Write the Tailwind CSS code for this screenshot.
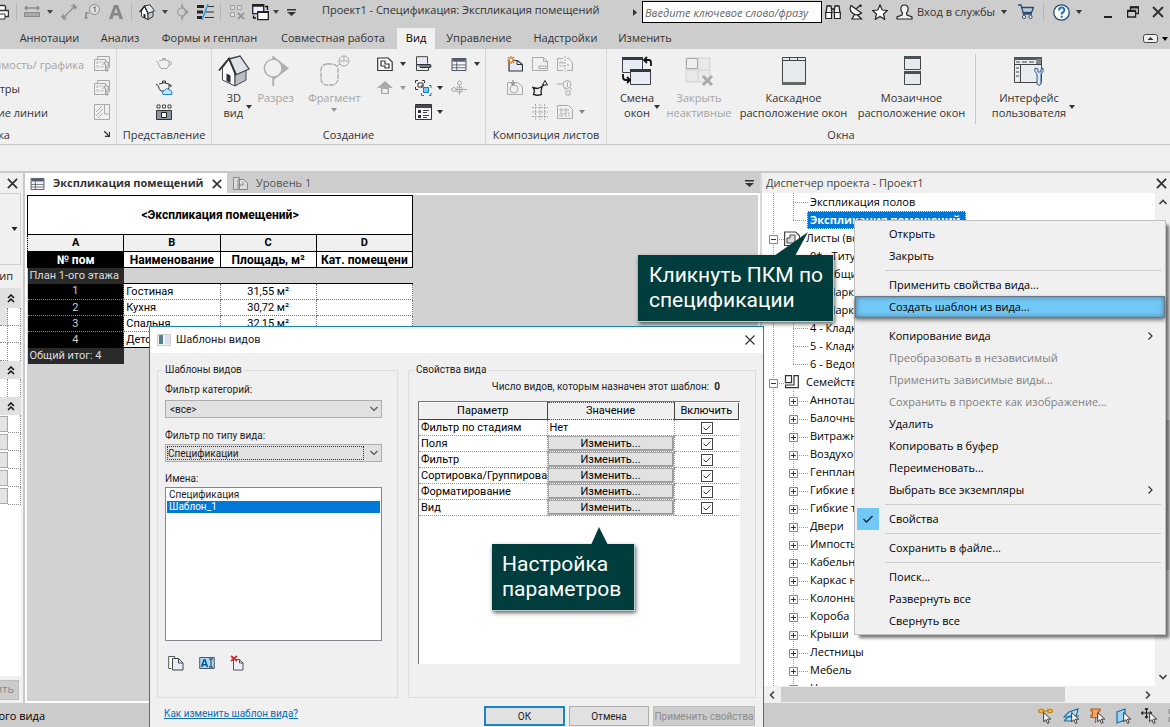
<!DOCTYPE html>
<html lang="ru">
<head>
<meta charset="utf-8">
<title>Проект1 - Спецификация: Экспликация помещений</title>
<script src="https://cdn.jsdelivr.net/npm/@tailwindcss/browser@4"></script>
</head>
<body class="bg-[#f0f0f0] font-['Open_Sans','Noto_Sans',sans-serif] text-[11px] text-[#1e1e1e]">
<svg class="hidden" aria-hidden="true">
  <symbol id="dn" viewBox="0 0 6 4"><path d="M0 0h6L3 4z" fill="currentColor"/></symbol>
  <symbol id="x" viewBox="0 0 12 12"><path d="M1 1l10 10M11 1L1 11" stroke="#333" stroke-width="2" fill="none"/></symbol>
  <symbol id="switch" viewBox="0 0 32 32"><path d="M1.500 2.500h20v15h-20z" fill="#e9ebf5" stroke="#3c4048"/><path d="M1 2h21v3H1z" fill="#33373f"/><path d="M9.500 14.500h20v15h-20z" fill="#e9ebf5" stroke="#3c4048"/><path d="M9 14h21v3H9z" fill="#33373f"/><path d="M24 5h4q2 0 2 3v3M26 2l-3 3 3 3M2 19v3q0 3 3 3h3M6 22l3 3-3 3" fill="none" stroke="#111" stroke-width="1.800"/></symbol>
  <symbol id="switch-sm" viewBox="0 0 17 17"><path d="M.7.7h11v9H.7z" fill="#eef" stroke="#222" stroke-width="1.300"/><path d="M0 1.500h12" stroke="#222" stroke-width="2.500"/><path d="M5.700 7.700h10.600v8H5.700z" fill="#fff" stroke="#222" stroke-width="1.300"/><path d="M5 8h12" stroke="#222" stroke-width="2"/><path d="M13 2.500h2.500V6M1.500 11.500V14H4" fill="none" stroke="#111" stroke-width="1.300"/></symbol>
  <symbol id="house" viewBox="0 0 32 32"><path d="M4.500 13v12L17 31V18L11 4z" fill="#fbfbfc" stroke="#444"/><path d="M17 18v13l11-6V13z" fill="#b9bdc5" stroke="#444"/><path d="M11 4l11-3 9 13-13.500 6z" fill="#dfe2e8" stroke="#444" stroke-width="1.300"/><path d="M1 15.500L11 3.500l7 16" fill="none" stroke="#333" stroke-width="1.800"/><path d="M8.500 18.500l4 2V28l-4-2z" fill="#2f3238"/></symbol>
  <symbol id="section" viewBox="0 0 30 34"><path d="M12 1L29 14 12 27z" fill="#b0b0b0"/><path d="M12 1v32" stroke="#b0b0b0" stroke-width="2"/><circle cx="12" cy="14" r="9.500" fill="#f0f0f0" stroke="#b0b0b0" stroke-width="1.500"/></symbol>
  <symbol id="teapot" viewBox="0 0 18 14"><path d="M4 4q5-2.500 10 0 1 4-2 7.500H6Q3.500 9 3.500 6L1 4M14 5q3-1 2.500 1.500Q16 8 13.500 9M7.500 3V1.500h3V3" fill="none" stroke="currentColor"/></symbol>
  <symbol id="vg" viewBox="0 0 16 16"><path d="M3.500 3V.5h12V12M.5 3.500h11v11H.5z" fill="none" stroke="#aaa"/><path d="M3 6h6v5H3z" fill="none" stroke="#aaa" stroke-dasharray="1.500 1"/><path d="M10 7q2-3 5 0l-1 3v5h-2v-5z" fill="#e4e4e4" stroke="#999"/></symbol>
  <symbol id="grid" viewBox="0 0 16 14"><path d="M.5.5h15v13H.5z" fill="#f5f5fa" stroke="#3a3f4c"/><path d="M1 1h14v3H1z" fill="#525c74"/><path d="M1 7.500h14M1 10.500h14M5.500 4v9" stroke="#3a3f4c" stroke-width=".8"/></symbol>
  <symbol id="chev2" viewBox="0 0 8 9"><path d="M1 4l3-3 3 3M1 8l3-3 3 3" fill="none" stroke="#111" stroke-width="1.500"/></symbol>
  <symbol id="chevd" viewBox="0 0 8 6"><path d="M.5 1L4 4.500 7.500 1" fill="none" stroke="#555" stroke-width="1.200"/></symbol>
  <symbol id="cursor" viewBox="0 0 8 11"><path d="M.5.5v8.500l2-2 1.500 3.500 1.500-.7L4 6.500h3z" fill="#fff" stroke="#333" stroke-width=".9"/></symbol>
  <symbol id="t-leaf" viewBox="0 0 46 18"><path d="M11.500 0v18M31.500 0v18M31 9.500h15" fill="none" stroke="#999" stroke-dasharray="1 1"/></symbol>
  <symbol id="t-last" viewBox="0 0 46 18"><path d="M11.500 0v18M31.500 0v9M31 9.500h15" fill="none" stroke="#999" stroke-dasharray="1 1"/></symbol>
  <symbol id="t-node" viewBox="0 0 46 18"><path d="M11.500 0v18M31.500 0v18M31 10.500h15" fill="none" stroke="#999" stroke-dasharray="1 1"/><path d="M27.500 6.500h8v8h-8z" fill="#fff" stroke="#888"/><path d="M29 10.500h5M31.500 8v5" stroke="#334"/></symbol>
  <symbol id="t-root" viewBox="0 0 22 18"><path d="M11.500 0v18M11 10.500h11" fill="none" stroke="#999" stroke-dasharray="1 1"/><path d="M7.500 6.500h8v8h-8z" fill="#fff" stroke="#888"/><path d="M9 10.500h5" stroke="#334"/></symbol>
</svg>

<div class="relative flex h-screen flex-col overflow-hidden whitespace-nowrap">
  <!-- Title bar -->
  <header class="flex h-7 shrink-0 items-center bg-[#cdcdcd] pb-1 text-[#333]">
    <div class="flex items-center text-[#444]">
      <svg class="h-4 w-4 -ml-[7px]" viewBox="0 0 16 16"><path d="M3.500 6V1.500h8l1 1V6M1.500 6.500h14v6h-14z" fill="#fff" stroke="#333" stroke-width="1.400"/><path d="M4 10h8v5H4z" fill="#fff" stroke="#333"/></svg>
      <span class="ml-[7px] h-5 w-px bg-[#b8b8b8]"></span>
      <svg class="ml-[7px] h-4 w-4" viewBox="0 0 16 16"><path d="M1 4h14M3 2L1 4l2 2M13 2l2 2-2 2" fill="none" stroke="#8b8b8b" stroke-width="1.300"/><path d="M.5 8.500h15v4H.5z" fill="#aaa" stroke="#8b8b8b"/></svg>
      <svg class="ml-[7px] h-1 w-[6px]"><use href="#dn"/></svg>
      <svg class="ml-2 h-4 w-4" viewBox="0 0 16 16"><path d="M2 14L14 2M10 2h4v4M2 10v4h4M0 12l4 4M12 0l4 4" fill="none" stroke="#8b8b8b" stroke-width="1.200"/></svg>
      <svg class="ml-[7px] h-4 w-4" viewBox="0 0 16 16"><circle cx="10.500" cy="5.500" r="5" fill="#ddd" stroke="#8b8b8b"/><path d="M11 8V3L9.500 4M2 14V9h3M.5 14h3" fill="none" stroke="#777" stroke-width="1.200"/></svg>
      <svg class="ml-[9px] h-[14px] w-[14px]" viewBox="0 0 14 14"><path d="M0 14L5 0h4l5 14h-3.500l-1-3.500h-5l-1 3.500zM5.300 8h3.400L7 3z" fill="#868686"/></svg>
      <span class="ml-2 h-5 w-px bg-[#b8b8b8]"></span>
      <svg class="ml-[7px] h-4 w-4" viewBox="0 0 16 16"><path d="M2.500 7v5.500L9 15.500V9L5.500 2z" fill="#fff" stroke="#333"/><path d="M9 9v6.500l5-3V7z" fill="#c4c8cf" stroke="#333"/><path d="M5.500 2L11 .8l4.500 6L9 9.500z" fill="#e6e8ec" stroke="#333"/><path d="M.5 8l5-6L9 9.500" fill="none" stroke="#222" stroke-width="1.200"/><path d="M4.500 9.500l2 1v4l-2-1z" fill="#222"/></svg>
      <svg class="ml-[7px] h-1 w-[6px]"><use href="#dn"/></svg>
      <svg class="ml-[7px] h-4 w-4" viewBox="0 0 16 16"><path d="M7 2l7 6-7 6z" fill="#999"/><path d="M7 0v16" stroke="#999" stroke-width="1.500"/><circle cx="6.500" cy="8" r="4" fill="#cdcdcd" stroke="#999"/></svg>
      <svg class="ml-[6px] h-4 w-[17px]" viewBox="0 0 17 16"><path d="M0 2.500h7M0 8h6M0 13.500h5" stroke="#222" stroke-width="3"/><path d="M10 2.500h7M9 8h8M8 13.500h9" stroke="#333" stroke-width="1.200"/><path d="M11 0L5 16" stroke="#2a9be0" stroke-width="1.500"/></svg>
      <span class="ml-[6px] h-5 w-px bg-[#b8b8b8]"></span>
      <svg class="ml-2 h-4 w-4" viewBox="0 0 16 16"><path d="M1.500 1.500h4v4h-4zM8.500 1.500h4v4h-4zM1.500 8.500h4v4h-4z" fill="#ddd" stroke="#a0a0a0"/><path d="M9 9l6 6M15 9l-6 6" stroke="#999" stroke-width="1.800"/></svg>
      <svg class="ml-[7px] h-[17px] w-[17px]"><use href="#switch-sm"/></svg>
      <svg class="ml-1 h-1 w-[6px]"><use href="#dn"/></svg>
      <svg class="ml-2 h-[7px] w-[9px]" viewBox="0 0 9 7"><path d="M0 0h9v1.500H0zM0 3h9L4.500 7z" fill="#333"/></svg>
    </div>
    <h1 class="ml-[26px] w-[304px] pb-[4px]">Проект1 - Спецификация: Экспликация помещений</h1>
    <svg class="ml-[7px] h-[7px] w-1" viewBox="0 0 4 7"><path d="M0 0l4 3.500L0 7z" fill="#333"/></svg>
    <input type="text" aria-label="Поиск" placeholder="Введите ключевое слово/фразу" class="ml-[5px] h-[22px] w-[180px] shrink-0 border border-black bg-white px-[2px] text-[11px] italic placeholder:text-[#666]">
    <div class="ml-auto flex shrink-0 items-center pr-[6px]">
      <svg class="h-4 w-4" viewBox="0 0 16 16"><path d="M1 9l1-7h4l1 7M9 9l1-7h4l1 7M7 5h2" fill="#eee" stroke="#222" stroke-width="1.300"/><path d="M.7 8.500h5.800v6H.7zM9.500 8.500h5.800v6H9.500z" fill="#fff" stroke="#222" stroke-width="1.200"/></svg>
      <svg class="ml-2 h-4 w-[15px]" viewBox="0 0 15 16"><path d="M2 1.500q-2.500 5 2 8t8.500-.5zM7 5l4-3.500M5.500 10.500L3 15h9.500L8.500 11" fill="#f4f4f4" stroke="#222" stroke-width="1.200"/><circle cx="11.500" cy="1.800" r="1.300" fill="#222"/></svg>
      <svg class="ml-2 h-4 w-4" viewBox="0 0 16 16"><path d="M8 1l2.200 5 5.300.5-4 3.500 1.200 5.300L8 12.500l-4.700 2.800L4.500 10l-4-3.500L5.800 6z" fill="#fff" stroke="#222" stroke-width="1.200"/></svg>
      <svg class="ml-2 h-4 w-[17px]" viewBox="0 0 17 16"><path d="M8.500 1c-5 0-4 6-2 8L6 11l-5 2v2h15v-2l-5-2-.5-2c2-2 3-8-2-8z" fill="#f2f2f2" stroke="#222" stroke-width="1.200"/></svg>
      <button class="ml-1 flex w-[90px] items-center justify-between">Вход в службы<svg class="h-1 w-[6px]"><use href="#dn"/></svg></button>
      <svg class="ml-[11px] h-4 w-4" viewBox="0 0 16 16"><path d="M0 1h3l2.500 9H14M3.500 3.500h12l-2 5H5" fill="#b9cbe0" stroke="#2c4a72" stroke-width="1.300"/><circle cx="6" cy="13" r="1.600" fill="#fff" stroke="#2c4a72"/><circle cx="12.500" cy="13" r="1.600" fill="#fff" stroke="#2c4a72"/></svg>
      <span class="ml-[9px] h-5 w-px bg-[#b8b8b8]"></span>
      <svg class="ml-[9px] h-[17px] w-[17px]" viewBox="0 0 17 17"><circle cx="8.500" cy="8.500" r="7.700" fill="#fff" stroke="#2c4a72" stroke-width="1.300"/><path d="M6 6.500q0-3 2.700-3t2.600 2.700q0 1.500-1.600 2.300-1 .5-1 2M8.700 11.700v2" fill="none" stroke="#1474b8" stroke-width="2"/></svg>
      <svg class="ml-[6px] h-1 w-[6px]"><use href="#dn"/></svg>
      <button aria-label="Свернуть" class="ml-[22px] flex h-4 items-end pb-[2px]"><span class="h-[2px] w-2 bg-[#222]"></span></button>
      <button aria-label="Восстановить" class="ml-[15px]"><svg class="h-3 w-3" viewBox="0 0 12 12"><path d="M3.500 4V.8h8v6.700H9M.6 4.500h8V11h-8z" fill="none" stroke="#222" stroke-width="1.300"/><path d="M3 1.500h9M0 5h9" stroke="#222" stroke-width="2"/></svg></button>
      <button aria-label="Закрыть" class="ml-[13px]"><svg class="h-3 w-3"><use href="#x"/></svg></button>
    </div>
  </header>

  <!-- Ribbon tabs -->
  <nav class="flex h-[21px] shrink-0 items-stretch bg-[#cdcdcd] pl-[9px] text-[#333]">
    <button class="w-[81px]">Аннотации</button>
    <button class="w-[60px]">Анализ</button>
    <button class="w-[119px]">Формы и генплан</button>
    <button class="w-[128px]">Совместная работа</button>
    <button class="w-[38px] bg-[#f0f0f0] text-black">Вид</button>
    <button class="w-[88px]">Управление</button>
    <button class="w-[85px]">Надстройки</button>
    <button class="w-[74px]">Изменить</button>
    <span class="ml-auto flex items-center gap-1 pr-[2px] text-black">
      <svg class="h-[9px] w-[15px]" viewBox="0 0 15 9"><rect x=".5" y=".5" width="14" height="8" rx="2" fill="#f0f0f0" stroke="#444"/><path d="M4.500 6h6l-3-3z" fill="#333"/></svg>
      <svg class="h-1 w-[6px]"><use href="#dn"/></svg>
    </span>
  </nav>

  <!-- Ribbon -->
  <section class="flex h-24 shrink-0 border-b border-[#c6c6c6] leading-[15px] text-[#333]">
    <div class="flex w-[117px] shrink-0 flex-col border-r border-[#d6d6d6] pt-[3px]">
      <div class="flex h-6 items-center justify-between pr-[6px] text-[#a4a4a4]"><span class="flex w-[84px] justify-end overflow-hidden">Видимость/ графика</span><svg class="h-4 w-4"><use href="#vg"/></svg></div>
      <div class="flex h-6 items-center justify-between pr-[6px]"><span class="flex w-5 justify-end overflow-hidden">Фильтры</span><svg class="h-4 w-4"><use href="#vg"/></svg></div>
      <div class="flex h-6 items-center justify-between pr-[6px]"><span class="flex w-12 justify-end overflow-hidden">Тонкие линии</span><svg class="h-4 w-4" viewBox="0 0 16 16"><path d="M.5.5h15v15H.5zM10.500 0v10H16M2 8l6-6M2 12L9 5M4 14l5-5" fill="none" stroke="#aaa"/></svg></div>
      <div class="flex h-5 items-center justify-between pr-[6px]"><span class="flex w-[10px] justify-end overflow-hidden">Графика</span><svg class="h-[6px] w-[6px]" viewBox="0 0 6 6"><path d="M0 0l5 5M5.500 1v4.500H1" fill="none" stroke="#333" stroke-width="1.300"/></svg></div>
    </div>
    <div class="flex w-[95px] shrink-0 flex-col items-center border-r border-[#d6d6d6] pt-[3px]">
      <svg class="my-[5px] h-[14px] w-[18px] text-[#aaa]"><use href="#teapot"/></svg>
      <svg class="my-1 h-4 w-[18px]" viewBox="0 0 18 16"><path d="M4 4q5-2.500 10 0 1 4-2 7H6Q3.500 9 3.500 6L1 4M14 5q3-1 2 2M7.500 3V1h3v2" fill="none" stroke="#333"/><path d="M8 14.500q-2-3 1.500-4 2-3.500 4.500-1 3.500.5 3 5z" fill="#c3e6fa" stroke="#1b84c4"/></svg>
      <svg class="my-1 h-4 w-4" viewBox="0 0 16 16"><path d="M1 1h3v3H1zM6.500 1h3v3h-3zM12 1h3v3h-3z" fill="#fff" stroke="#444"/><path d="M.5 6.500h15v9H.5z" fill="#8b98a2" stroke="#333"/><path d="M5.500 8.500h5v5h-5z" fill="#fff" stroke="#222"/></svg>
      <div class="flex h-5 items-center">Представление</div>
    </div>
    <div class="flex w-[274px] shrink-0 flex-col border-r border-[#d6d6d6] pt-[3px]">
      <div class="flex h-[72px]">
        <div class="flex w-11 flex-col items-center pt-[3px]"><svg class="h-8 w-8"><use href="#house"/></svg><span class="mt-[3px]">3D</span><span class="flex items-start gap-[3px] pl-2">вид<svg class="h-1 w-[6px]"><use href="#dn"/></svg></span></div>
        <div class="flex w-10 flex-col items-center pt-[3px] text-[#a4a4a4]"><svg class="h-8 w-[28px]"><use href="#section"/></svg><span class="mt-[3px]">Разрез</span></div>
        <div class="flex w-[78px] flex-col items-center pt-[3px] text-[#a4a4a4]"><svg class="h-8 w-8" viewBox="0 0 32 32"><rect x="3" y="9" width="17" height="21" rx="6" fill="none" stroke="#aaa" stroke-width="1.300" stroke-dasharray="5 1"/><circle cx="26" cy="6" r="5" fill="none" stroke="#aaa"/><path d="M19 11l3-2M21 6h10M26 1v5" stroke="#aaa"/></svg><span class="mt-[3px]">Фрагмент</span><svg class="mt-[3px] h-1 w-[6px] text-[#999]"><use href="#dn"/></svg></div>
        <div class="grid grid-cols-[38px_36px_34px] grid-rows-3 items-center pl-1">
          <span class="flex items-center gap-[7px]"><svg class="h-4 w-4" viewBox="0 0 16 16"><path d="M.7 2h10.500l4 4v8.500H.7z" fill="#fff" stroke="#333" stroke-width="1.200"/><path d="M4 5h4v3h4v4H8v-2H4z" fill="none" stroke="#333" stroke-width="1.200"/></svg><svg class="h-1 w-[6px]"><use href="#dn"/></svg></span>
          <svg class="h-4 w-[17px]" viewBox="0 0 17 16"><path d="M1.500 14.500V.7h11v6.800" fill="#e8eaf2" stroke="#444"/><path d="M1.500 8.500H15l1 1.500-1 1.500H5" fill="#777e8a" stroke="#333" stroke-width="1.200"/><path d="M1.500 14.500h12v-3" fill="none" stroke="#444"/></svg>
          <span class="flex items-center gap-[7px]"><svg class="h-[13px] w-4"><use href="#grid"/></svg><svg class="h-1 w-[6px]"><use href="#dn"/></svg></span>
          <span class="flex items-center gap-[7px] text-[#999]"><svg class="h-4 w-4" viewBox="0 0 16 16"><path d="M0 8l8-7 8 7h-4v6H4V8z" fill="#aaa"/><path d="M5.500 9h5v4h-5z" fill="#f0f0f0"/></svg><svg class="h-1 w-[6px]"><use href="#dn"/></svg></span>
          <span class="flex items-center gap-[5px]"><svg class="h-4 w-[17px]" viewBox="0 0 17 16"><path d="M.5 3V.5H3M7 .5h2.500V3M.5 7v2.500H3M3 3h5v4H3z" fill="none" stroke="#333"/><path d="M6.500 8V5.500H9M14 5.500h2V8M6.500 13v2.500H9M14 15.500h2V13" fill="none" stroke="#0b7cc4"/><path d="M8.500 7.500h5v5h-5z" fill="#7cc8f0" stroke="#0b7cc4"/></svg><svg class="h-1 w-[6px]"><use href="#dn"/></svg></span>
          <svg class="h-4 w-4" viewBox="0 0 16 16"><path d="M8.500 1v14M0 9.500h16" stroke="#aaa"/><circle cx="8.500" cy="3" r="2" fill="#f0f0f0" stroke="#aaa"/><circle cx="3" cy="9.500" r="2" fill="#f0f0f0" stroke="#aaa"/><path d="M6 7h5v5H6z" fill="none" stroke="#aaa"/></svg>
          <span></span>
          <span class="flex items-center gap-[5px]"><svg class="h-4 w-[17px]" viewBox="0 0 17 16"><path d="M.5.5h16v15H.5z" fill="#f5f5fa" stroke="#333"/><path d="M1 1h15v3H1z" fill="#444b55"/><path d="M3 6h3v3H3zM3 11h3v3H3z" fill="#333"/><path d="M8 6.500h6M8 8.500h4M8 11.500h6M8 13.500h4" stroke="#444"/></svg><svg class="h-1 w-[6px]"><use href="#dn"/></svg></span>
          <span></span>
        </div>
      </div>
      <div class="flex h-5 items-center justify-center">Создание</div>
    </div>
    <div class="flex w-[121px] shrink-0 flex-col border-r border-[#d6d6d6] pt-[3px]">
      <div class="grid h-[72px] grid-cols-[25px_25px_30px] items-center pl-[21px] text-[#aaa]">
        <svg class="h-4 w-4" viewBox="0 0 16 16"><path d="M2 4.500h8.500l5 4v6.500H2z" fill="#e6e9f6" stroke="#333" stroke-width="1.200"/><path d="M10 4.500v4h5" fill="none" stroke="#333"/><path d="M4 0v8M0 4h8M1 1l6 6M7 1L1 7" stroke="#d9761c" stroke-width="1.200"/><circle cx="4" cy="4" r="1.500" fill="#fff"/></svg>
        <svg class="h-4 w-4" viewBox="0 0 16 16"><path d="M.5 1.500h11l4 4v9H.5zM11.500 1.500v4h4M7 10h7v2.500H7z" fill="none" stroke="#aaa"/></svg>
        <svg class="h-4 w-4" viewBox="0 0 16 16"><path d="M6 2.500H.5v12H6M10 2.500h2l3.500 4v8H10" fill="none" stroke="#aaa"/><path d="M8 0v16M3 6h3v4H3zM10 9h3" stroke="#aaa" fill="none" stroke-dasharray="2 1"/></svg>
        <svg class="h-4 w-4" viewBox="0 0 16 16"><path d="M.5 2.500h10l5 4v8H.5z" fill="none" stroke="#aaa"/><circle cx="7" cy="9" r="4" fill="none" stroke="#aaa"/><path d="M6 0v5M4 3l2 2 2-2" stroke="#999" fill="none" stroke-width="1.300"/></svg>
        <svg class="h-4 w-4" viewBox="0 0 16 16"><path d="M1 7.500l4 1 5-1.500-1 4 .5 3.500-4 1-4-1 1-4zM9 7l3-2" fill="none" stroke="#222" stroke-width="1.300"/><path d="M13 .5l2.500 4.500h-5z" fill="none" stroke="#222"/></svg>
        <svg class="h-4 w-4" viewBox="0 0 16 16"><circle cx="10" cy="4.500" r="4" fill="none" stroke="#aaa"/><path d="M0 4h6M10.500 2v5M9 11h4v4H9zM7 9h2M13 9h2" fill="none" stroke="#aaa"/></svg>
        <span></span>
        <svg class="h-4 w-4" viewBox="0 0 16 16"><path d="M3.500 0v16M8 0v16M12.500 0v16M0 3.500h16M0 8h16M0 12.500h16" stroke="#aaa" stroke-dasharray="2 1" fill="none"/></svg>
        <span class="flex items-center gap-[6px]"><svg class="h-4 w-4 shrink-0" viewBox="0 0 16 16"><path d="M.5 1.500h11l4 4v9H.5z" fill="none" stroke="#aaa"/><path d="M3 5h3v2H3zM8 5h3v2H8zM3 9h3v3H3zM8 9h4v3H8z" fill="none" stroke="#aaa" stroke-dasharray="2 1"/></svg><svg class="h-1 w-[6px] shrink-0 text-[#888]"><use href="#dn"/></svg></span>
      </div>
      <div class="flex h-5 items-center justify-center">Композиция листов</div>
    </div>
    <div class="flex flex-1">
      <div class="flex w-[369px] shrink-0 flex-col pt-[3px] text-center">
        <div class="mt-[2px] flex h-[70px] border-r border-[#c8c8c8]">
          <div class="flex w-[60px] flex-col items-center pt-px"><svg class="h-8 w-8"><use href="#switch"/></svg><span class="mt-[3px]">Смена</span><span class="flex gap-1 pl-[10px]">окон<svg class="h-1 w-[6px]"><use href="#dn"/></svg></span></div>
          <div class="flex w-16 flex-col items-center pt-px text-[#a4a4a4]"><svg class="h-8 w-8" viewBox="0 0 32 32"><path d="M3 3h24v24H3zM15 3v24M3 15h24" fill="#e9e9e9" stroke="#d0d0d0"/><path d="M3.500 3.500h11v10h-11z" fill="#eee" stroke="#aaa"/><path d="M20 21l9 9M29 21l-9 9" stroke="#aaa" stroke-width="3"/></svg><span class="mt-[3px]">Закрыть<br>неактивные</span></div>
          <div class="flex w-[125px] flex-col items-center pt-px"><svg class="h-8 w-8" viewBox="0 0 32 32"><path d="M4.500 2.500h23v25h-23z" fill="#e6e9ee" stroke="#444"/><path d="M4 27h24v3H4z" fill="#666"/><path d="M5 5.500h22M11.500 3v3M19.500 3v3" stroke="#444" fill="none"/></svg><span class="mt-[3px]">Каскадное<br>расположение окон</span></div>
          <div class="flex w-[111px] flex-col items-center pt-px"><svg class="h-8 w-8" viewBox="0 0 32 32"><path d="M8.500 1.500h16v13h-16zM8.500 16.500h16v13h-16z" fill="#e6e9ee" stroke="#444"/><path d="M8 1h17v3H8zM8 16h17v3H8z" fill="#4a5058"/></svg><span class="mt-[3px]">Мозаичное<br>расположение окон</span></div>
        </div>
        <div class="flex h-5 items-center justify-center pl-[99px]">Окна</div>
      </div>
      <div class="flex w-[112px] items-start justify-center pt-[6px] text-center">
        <div class="flex w-20 flex-col items-center"><svg class="h-8 w-8" viewBox="0 0 32 32"><path d="M1.500 2.500h27v25h-27zM1.500 9.500h27M7.500 9.500v18" fill="#e9ecf0" stroke="#444"/><path d="M1 2h28v3H1z" fill="#525860"/><path d="M23 4h5v5h-5z" fill="#888"/><path d="M3 7h4M9 7h5M16 7h5M3 13h3M3 17h3M3 21h3" stroke="#444"/><path d="M22 13q-1 4 2 6v10q2 3 4 0V19q3-2 2-6l-2 1v3h-3v-3z" fill="#dfe9f3" stroke="#2c5a8a"/></svg><span class="mt-[3px]">Интерфейс<br>пользователя</span></div>
        <svg class="mt-[50px] h-1 w-[6px] shrink-0"><use href="#dn"/></svg>
      </div>
    </div>
  </section>

  <!-- Options bar -->
  <div class="h-7 shrink-0 border-b-2 border-[#c9c9c9]"></div>

  <main class="flex min-h-0 flex-1">
    <!-- Properties palette, mostly off-screen -->
    <aside class="flex w-[23px] shrink-0 flex-col overflow-hidden pr-[2px]">
      <div class="flex h-5 items-center justify-end pr-[3px]"><button aria-label="Закрыть свойства"><svg class="h-[11px] w-[11px]"><use href="#x"/></svg></button></div>
      <div class="flex h-[72px] items-center justify-end border-y border-r border-[#d0d0d0] pr-[2px]"><svg class="h-1 w-[7px]"><use href="#dn"/></svg></div>
      <div class="flex h-[23px] items-center justify-end overflow-hidden pr-2">Тип</div>
      <div class="flex h-5 items-center justify-end bg-[#e0e0e0] pr-[6px]"><svg class="h-[9px] w-2"><use href="#chev2"/></svg></div>
      <div class="grid h-[53px] grid-cols-[8px_1fr] grid-rows-3 divide-y divide-dotted divide-[#888] bg-white">
        <span class="border-r border-dotted border-[#888] bg-[#e3e3e3]"></span><span class="border-r border-dotted border-[#888]"></span>
        <span class="border-r border-dotted border-[#888]"></span><span class="border-r border-dotted border-[#888]"></span>
        <span class="border-r border-dotted border-[#888]"></span><span class="border-r border-dotted border-[#888]"></span>
      </div>
      <div class="flex h-[18px] items-center justify-end bg-[#e0e0e0] pr-[6px]"><svg class="h-[9px] w-2"><use href="#chev2"/></svg></div>
      <div class="flex h-[18px] bg-white"><span class="w-2 border-r border-dotted border-[#888]"></span><span class="flex-1 border-r border-dotted border-[#888]"></span></div>
      <div class="flex h-[18px] items-center justify-end bg-[#e0e0e0] pr-[6px]"><svg class="h-[9px] w-2"><use href="#chev2"/></svg></div>
      <div class="flex h-[18px] bg-white"><span class="my-px w-2 border border-l-0 border-[#aaa] bg-[#e3e3e3]"></span><span class="flex-1 border-r border-b border-dotted border-[#888]"></span></div>
      <div class="flex h-[18px] bg-white"><span class="my-px w-2 border border-l-0 border-[#aaa] bg-[#e3e3e3]"></span><span class="flex-1 border-r border-b border-dotted border-[#888]"></span></div>
      <div class="flex h-[18px] bg-white"><span class="my-px w-2 border border-l-0 border-[#aaa] bg-[#e3e3e3]"></span><span class="flex-1 border-r border-b border-dotted border-[#888]"></span></div>
      <div class="flex h-[18px] bg-white"><span class="my-px w-2 border border-l-0 border-[#aaa] bg-[#e3e3e3]"></span><span class="flex-1 border-r border-b border-dotted border-[#888]"></span></div>
      <div class="flex h-[18px] bg-white"><span class="my-px w-2 border border-l-0 border-[#aaa] bg-[#e3e3e3]"></span><span class="flex-1 border-r border-b border-dotted border-[#888]"></span></div>
      <div class="flex-1 bg-white"></div>
      <div class="flex h-[27px] items-center pr-[2px]"><button class="flex h-5 w-full items-center justify-end overflow-hidden border border-l-0 border-[#bbb] bg-[#ccc] pr-1 text-[#888]">Применить</button></div>
    </aside>
    <div class="w-[2px] shrink-0 bg-[#c9c9c9]"></div>

    <!-- Schedule view -->
    <section class="flex min-w-0 flex-1 flex-col">
      <div class="flex h-5 shrink-0 items-center bg-[#cdcdcd]">
        <div class="flex h-full w-[202px] items-center bg-white pt-px pl-[5px] font-bold text-[#333]"><svg class="h-3 w-[15px]"><use href="#grid"/></svg><span class="ml-2 w-[158px]">Экспликация помещений</span><button aria-label="Закрыть вид" class="ml-px"><svg class="h-[10px] w-[10px]"><use href="#x"/></svg></button></div>
        <svg class="ml-[6px] h-[13px] w-[15px]" viewBox="0 0 15 13"><path d="M.5.5h6v12h-6zM5 2.500h5.500l4 3.500v6.500H5z" fill="#ddd" stroke="#888"/><path d="M5 8h5M10 5v3" stroke="#888"/></svg>
        <span class="ml-2 pt-px text-[#555]">Уровень 1</span>
        <svg class="mr-[6px] ml-auto h-[7px] w-[9px]" viewBox="0 0 9 7"><path d="M0 0h9v1.500H0zM0 3h9L4.500 7z" fill="#333"/></svg>
      </div>
      <div class="min-h-0 flex-1 border-2 border-white bg-[#d2d2d2]">
        <table class="w-[386px] table-fixed border-collapse text-center font-['Roboto',sans-serif] text-[11px] leading-[14px] text-black">
          <thead>
            <tr><th colspan="4" class="h-[39px] border border-black bg-white p-0 text-xs">&lt;Экспликация помещений&gt;</th></tr>
            <tr class="h-[17px] bg-[#f0f0f0]"><th class="border border-dotted border-black p-0">A</th><th class="border border-black p-0">B</th><th class="border border-black p-0">C</th><th class="border border-black p-0">D</th></tr>
            <tr class="h-4 bg-white text-xs leading-[14px]"><th class="border border-black bg-black p-0 leading-[14px] text-white">№ пом</th><th class="border border-black p-0 leading-[14px]">Наименование</th><th class="border border-black p-0 leading-[14px]">Площадь, м²</th><th class="overflow-hidden border border-black p-0 leading-[14px]">Кат. помещени</th></tr>
          </thead>
          <tbody>
            <tr class="h-4"><td class="overflow-hidden bg-[#2a2a2a] p-0 pl-[2px] text-left text-[#ddd]">План 1-ого этажа</td><td colspan="3" class="border-b border-black p-0"></td></tr>
            <tr class="h-4 bg-white"><td class="border-b border-dotted border-[#888] bg-black p-0 text-[#ccc]">1</td><td class="border border-dotted border-[#777] p-0 pl-[2px] text-left">Гостиная</td><td class="border border-dotted border-[#777] p-0">31,55 м²</td><td class="border border-dotted border-[#777] p-0"></td></tr>
            <tr class="h-4 bg-white"><td class="border-b border-dotted border-[#888] bg-black p-0 text-[#ccc]">2</td><td class="border border-dotted border-[#777] p-0 pl-[2px] text-left">Кухня</td><td class="border border-dotted border-[#777] p-0">30,72 м²</td><td class="border border-dotted border-[#777] p-0"></td></tr>
            <tr class="h-4 bg-white"><td class="border-b border-dotted border-[#888] bg-black p-0 text-[#ccc]">3</td><td class="border border-dotted border-[#777] p-0 pl-[2px] text-left">Спальня</td><td class="border border-dotted border-[#777] p-0">32,15 м²</td><td class="border border-dotted border-[#777] p-0"></td></tr>
            <tr class="h-4 bg-white"><td class="bg-black p-0 text-[#ccc]">4</td><td class="border border-dotted border-[#777] p-0 pl-[2px] text-left">Детская</td><td class="border border-dotted border-[#777] p-0"></td><td class="border border-dotted border-[#777] p-0"></td></tr>
            <tr class="h-4"><td class="bg-[#2a2a2a] p-0 pl-[2px] text-left text-[#ddd]">Общий итог: 4</td><td colspan="3" class="border-t border-black p-0"></td></tr>
          </tbody>
        </table>
      </div>
    </section>

    <!-- Project browser -->
    <aside class="flex w-[410px] shrink-0 flex-col border-l-2 border-[#d8d8d8]">
      <div class="flex h-5 shrink-0 items-center justify-between pt-px pr-[3px] pl-1 text-[#444]"><h2>Диспетчер проекта - Проект1</h2><button aria-label="Закрыть диспетчер"><svg class="h-[11px] w-[11px]"><use href="#x"/></svg></button></div>
      <div class="flex min-h-0 flex-1">
        <ul class="min-w-0 flex-1 overflow-hidden bg-white text-black">
          <li class="flex h-[18px] items-center"><svg class="h-[18px] w-[46px]"><use href="#t-leaf"/></svg><span class="pl-[2px]">Экспликация полов</span></li>
          <li class="flex h-[18px] items-center"><svg class="h-[18px] w-[46px]"><use href="#t-last"/></svg><span class="-ml-px w-[159px] overflow-hidden border border-dotted border-[#eda] bg-[#0078d7] pl-[2px] leading-4 font-bold text-white">Экспликация помещений</span></li>
          <li class="flex h-[18px] items-center"><svg class="h-[18px] w-[22px]"><use href="#t-root"/></svg><svg class="h-[15px] w-4" viewBox="0 0 16 15"><path d="M.6 1h11l4 4v9.500H.6z" fill="#fff" stroke="#444" stroke-width="1.200"/><path d="M3 12V7h3V4h5v8z" fill="#ddd" stroke="#444"/></svg><span class="pl-[6px]">Листы (все)</span></li>
          <li class="flex h-[18px] items-center"><svg class="h-[18px] w-[46px]"><use href="#t-leaf"/></svg><span class="pl-[2px]">0* - Титул</span></li>
          <li class="flex h-[18px] items-center"><svg class="h-[18px] w-[46px]"><use href="#t-leaf"/></svg><span class="pl-[2px]">1 - Общие</span></li>
          <li class="flex h-[18px] items-center"><svg class="h-[18px] w-[46px]"><use href="#t-leaf"/></svg><span class="pl-[2px]">2 - Марки</span></li>
          <li class="flex h-[18px] items-center"><svg class="h-[18px] w-[46px]"><use href="#t-leaf"/></svg><span class="pl-[2px]">3 - Марки</span></li>
          <li class="flex h-[18px] items-center"><svg class="h-[18px] w-[46px]"><use href="#t-leaf"/></svg><span class="pl-[2px]">4 - Кладка</span></li>
          <li class="flex h-[18px] items-center"><svg class="h-[18px] w-[46px]"><use href="#t-leaf"/></svg><span class="pl-[2px]">5 - Кладка</span></li>
          <li class="flex h-[18px] items-center"><svg class="h-[18px] w-[46px]"><use href="#t-last"/></svg><span class="pl-[2px]">6 - Ведомость</span></li>
          <li class="flex h-[18px] items-center"><svg class="h-[18px] w-[22px]"><use href="#t-root"/></svg><svg class="h-[14px] w-4" viewBox="0 0 16 14"><path d="M1.500.7h6v7h-6zM10 .7h4.300v12H1.500V10H10z" fill="#fff" stroke="#333" stroke-width="1.200"/></svg><span class="pl-[6px]">Семейства</span></li>
          <li class="flex h-[18px] items-center"><svg class="h-[18px] w-[46px]"><use href="#t-node"/></svg><span class="pl-[2px]">Аннотации</span></li>
          <li class="flex h-[18px] items-center"><svg class="h-[18px] w-[46px]"><use href="#t-node"/></svg><span class="pl-[2px]">Балочные</span></li>
          <li class="flex h-[18px] items-center"><svg class="h-[18px] w-[46px]"><use href="#t-node"/></svg><span class="pl-[2px]">Витражные</span></li>
          <li class="flex h-[18px] items-center"><svg class="h-[18px] w-[46px]"><use href="#t-node"/></svg><span class="pl-[2px]">Воздуховоды</span></li>
          <li class="flex h-[18px] items-center"><svg class="h-[18px] w-[46px]"><use href="#t-node"/></svg><span class="pl-[2px]">Генплан</span></li>
          <li class="flex h-[18px] items-center"><svg class="h-[18px] w-[46px]"><use href="#t-node"/></svg><span class="pl-[2px]">Гибкие воздуховоды</span></li>
          <li class="flex h-[18px] items-center"><svg class="h-[18px] w-[46px]"><use href="#t-node"/></svg><span class="pl-[2px]">Гибкие трубы</span></li>
          <li class="flex h-[18px] items-center"><svg class="h-[18px] w-[46px]"><use href="#t-node"/></svg><span class="pl-[2px]">Двери</span></li>
          <li class="flex h-[18px] items-center"><svg class="h-[18px] w-[46px]"><use href="#t-node"/></svg><span class="pl-[2px]">Импосты</span></li>
          <li class="flex h-[18px] items-center"><svg class="h-[18px] w-[46px]"><use href="#t-node"/></svg><span class="pl-[2px]">Кабельные</span></li>
          <li class="flex h-[18px] items-center"><svg class="h-[18px] w-[46px]"><use href="#t-node"/></svg><span class="pl-[2px]">Каркас несущий</span></li>
          <li class="flex h-[18px] items-center"><svg class="h-[18px] w-[46px]"><use href="#t-node"/></svg><span class="pl-[2px]">Колонны</span></li>
          <li class="flex h-[18px] items-center"><svg class="h-[18px] w-[46px]"><use href="#t-node"/></svg><span class="pl-[2px]">Короба</span></li>
          <li class="flex h-[18px] items-center"><svg class="h-[18px] w-[46px]"><use href="#t-node"/></svg><span class="pl-[2px]">Крыши</span></li>
          <li class="flex h-[18px] items-center"><svg class="h-[18px] w-[46px]"><use href="#t-node"/></svg><span class="pl-[2px]">Лестницы</span></li>
          <li class="flex h-[18px] items-center"><svg class="h-[18px] w-[46px]"><use href="#t-node"/></svg><span class="pl-[2px]">Мебель</span></li>
          <li class="flex h-[18px] items-center"><svg class="h-[18px] w-[46px]"><use href="#t-node"/></svg><span class="pl-[2px]">Н</span></li>
        </ul>
        <div class="flex w-[15px] flex-col items-center justify-between py-[6px]">
          <svg class="h-[6px] w-2" viewBox="0 0 8 6"><path d="M.5 5L4 1.500 7.500 5" fill="none" stroke="#444" stroke-width="1.600"/></svg>
          <span class="mt-[215px] h-[150px] w-[15px] bg-[#cdcdcd]"></span>
          <svg class="mt-auto h-[6px] w-2" viewBox="0 0 8 6"><path d="M.5 1L4 4.500 7.500 1" fill="none" stroke="#444" stroke-width="1.600"/></svg>
        </div>
      </div>
      <div class="flex h-[17px] shrink-0 items-center pr-[19px] pl-[7px]">
        <svg class="h-2 w-[6px]" viewBox="0 0 6 8"><path d="M5 .5L1.500 4 5 7.500" fill="none" stroke="#444" stroke-width="1.600"/></svg>
        <span class="ml-[6px] h-[15px] w-[284px] bg-[#cdcdcd]"></span>
        <svg class="ml-auto h-2 w-[6px]" viewBox="0 0 6 8"><path d="M1 .5L4.500 4 1 7.500" fill="none" stroke="#444" stroke-width="1.600"/></svg>
      </div>
    </aside>
  </main>

  <!-- Status bar -->
  <footer class="flex h-6 shrink-0 items-center bg-[#cbcbcb] pt-[2px] text-black">
    <span class="flex w-[45px] justify-end overflow-hidden">Щелчок выбранного вида</span>
    <div class="-mr-[13px] ml-auto flex items-center gap-[9px]">
      <svg class="h-4 w-[17px]" viewBox="0 0 17 16"><path d="M3 1.500h3v3H3q-3-1.500 0-3zM6 3h5M11 1.500h3q3 1.500 0 3h-3z" fill="#f8d080" stroke="#cf8a10" stroke-width="1.500"/><use href="#cursor" x="6" y="4" width="9" height="12"/></svg>
      <svg class="h-4 w-[17px]" viewBox="0 0 17 16"><path d="M1 13L6 8h10M1 9l5-5L15 1l-2 8zM1 13h8" fill="#b5dcf4" stroke="#216d9c" stroke-width="1.200"/><use href="#cursor" x="8" y="4" width="9" height="12"/></svg>
      <svg class="h-4 w-[17px]" viewBox="0 0 17 16"><path d="M2 1h9v2H9.500v4H11v2.500H2V7h1.500V3H2zM6.500 10v5" fill="#f1a56a" stroke="#b75c18" stroke-width="1.200"/><use href="#cursor" x="8" y="4" width="9" height="12"/></svg>
      <svg class="h-4 w-[17px]" viewBox="0 0 17 16"><path d="M2 4l8-3v11l-8 3z" fill="#9ed2f2" stroke="#176ea6" stroke-width="1.200"/><use href="#cursor" x="8" y="4" width="9" height="12"/></svg>
      <svg class="h-4 w-[17px]" viewBox="0 0 17 16"><path d="M5.500 0v10M.5 5h10M4 1.500L5.500 0 7 1.500M4 8.500L5.500 10 7 8.500M2 3.500L.5 5 2 6.500M9 3.500L10.500 5 9 6.500" fill="none" stroke="#222" stroke-width="1.200"/><use href="#cursor" x="8" y="4" width="9" height="12"/></svg>
      <svg class="h-4 w-4" viewBox="0 0 16 16"><path d="M6 2H2.500v4M2.500 9v4H6" fill="none" stroke="#999" stroke-width="2"/></svg>
    </div>
  </footer>

  <!-- View templates dialog -->
  <div role="dialog" aria-label="Шаблоны видов" class="absolute top-[326px] left-[149px] flex w-[615px] flex-col border border-[#1883b7] bg-[#f0f0f0] font-['Roboto',sans-serif] text-[10px]">
    <div class="flex h-[26px] items-center bg-white pr-2 pl-[7px] text-[11px] text-[#222]">
      <svg class="h-3 w-[14px]" viewBox="0 0 14 12"><path d="M.5.500h13v11H.5z" fill="#eef2f5" stroke="#ccc"/><path d="M2 1h4v9H2z" fill="#52808b"/><path d="M8 1h5v9H8z" fill="#d8e2e8"/></svg>
      <span class="ml-[5px]">Шаблоны видов</span>
      <button aria-label="Закрыть окно" class="ml-auto"><svg class="h-[10px] w-[10px]" viewBox="0 0 10 10"><path d="M.5.5l9 9M9.500.5l-9 9" stroke="#333" stroke-width="1.200"/></svg></button>
    </div>
    <div class="flex gap-[10px] px-[7px] pt-[10px]">
      <fieldset class="h-[335px] w-[241px] border border-[#dcdcdc] px-[7px]">
        <legend class="-ml-[2px] px-[2px] leading-[14px]">Шаблоны видов</legend>
        <label for="cat" class="mt-[6px] block leading-[14px]">Фильтр категорий:</label>
        <div class="relative mt-[3px]"><select id="cat" class="h-[18px] w-[217px] appearance-none border border-[#adadad] bg-[#e1e1e1] px-1"><option>&lt;все&gt;</option></select><svg class="pointer-events-none absolute top-[6px] right-[12px] h-[6px] w-2"><use href="#chevd"/></svg></div>
        <label for="typ" class="mt-[11px] block leading-[14px]">Фильтр по типу вида:</label>
        <div class="relative mt-px"><select id="typ" class="h-[18px] w-[217px] appearance-none border border-[#adadad] bg-[#e1e1e1] px-[2px]"><option>Спецификации</option></select><span class="pointer-events-none absolute top-[2px] left-[2px] h-[14px] w-[197px] border border-dotted border-[#333]"></span><svg class="pointer-events-none absolute top-[6px] right-[12px] h-[6px] w-2"><use href="#chevd"/></svg></div>
        <div id="names" class="mt-[10px] leading-[14px]">Имена:</div>
        <ul role="listbox" aria-labelledby="names" class="mt-px h-[154px] w-[217px] border border-[#828790] bg-white p-px leading-3">
          <li role="option" class="pl-[2px]">Спецификация</li>
          <li role="option" aria-selected="true" class="bg-[#0078d7] pl-[2px] text-white">Шаблон_1</li>
        </ul>
        <div class="mt-[14px] flex items-center gap-[15px] pl-[3px]">
          <button aria-label="Копировать"><svg class="h-4 w-4" viewBox="0 0 16 16"><path d="M3 13.500H.7V1.500h6V3" fill="#fff" stroke="#555"/><path d="M4.500 3.500h6l4.500 4.500v7H4.500z" fill="#e6ecf8" stroke="#444"/><path d="M10.500 3.500V8H15" fill="none" stroke="#444"/></svg></button>
          <button aria-label="Переименовать"><svg class="h-[14px] w-4" viewBox="0 0 16 14"><path d="M.7 1.500h14.600v11H.7z" fill="#a8d8f5" stroke="#4a5c6c"/><path d="M2.500 11L5 4h1l2.500 7M3.500 8.700h4" fill="none" stroke="#08508c" stroke-width="1.500"/><path d="M10 3h4M12 3v8M10 11h4" stroke="#333"/></svg></button>
          <button aria-label="Удалить"><svg class="h-4 w-[14px]" viewBox="0 0 14 16"><path d="M3.500 4.500h6l3.500 3.500v7H3.500z" fill="#eef0f8" stroke="#555"/><path d="M9.500 4.500V8H13" fill="none" stroke="#555"/><path d="M1 1l6 5M7 1L1 6" stroke="#d32a2a" stroke-width="1.800"/></svg></button>
        </div>
      </fieldset>
      <fieldset class="h-[335px] flex-1 border border-[#dcdcdc] pr-3 pl-[9px]">
        <legend class="-ml-1 px-[2px] leading-[14px]">Свойства вида</legend>
        <p class="mt-[3px] flex justify-end gap-[5px] pr-[23px] leading-[14px]">Число видов, которым назначен этот шаблон: <b>0</b></p>
        <div class="mt-[7px] mr-[3px] h-[263px] border-t border-l border-[#777] bg-white">
          <table class="w-[320px] table-fixed border-collapse text-[11px] leading-[14px] text-black">
            <colgroup><col class="w-[128px]"><col class="w-[127px]"><col></colgroup>
            <thead><tr class="h-[17px] bg-[#f0f0f0]"><th class="border border-t-0 border-l-0 border-[#444] p-0 font-normal">Параметр</th><th class="border border-dotted border-[#444] p-0 font-normal">Значение</th><th class="border border-t-0 border-[#444] p-0 font-normal">Включить</th></tr></thead>
            <tbody>
              <tr class="h-4 border-b border-dotted border-[#999]"><td class="border-r border-dotted border-[#999] p-0 pl-[2px]">Фильтр по стадиям</td><td class="border-r border-dotted border-[#999] p-0 pl-[2px]">Нет</td><td class="p-0"><label class="relative mx-auto block h-3 w-3"><input type="checkbox" checked aria-label="Фильтр по стадиям" class="block h-3 w-3 appearance-none border border-[#444] bg-white"><svg class="pointer-events-none absolute top-[3px] left-[2px] h-[6px] w-2" viewBox="0 0 8 6"><path d="M.5 2.500L3 5 7.500.5" fill="none" stroke="#333"/></svg></label></td></tr>
              <tr class="h-4 border-b border-dotted border-[#999]"><td class="border-r border-dotted border-[#999] p-0 pl-[2px]">Поля</td><td class="border-r border-dotted border-[#999] p-0"><button class="block h-[15px] w-full border border-[#aaa] bg-[#e1e1e1] leading-3 shadow-[inset_-1px_-1px_0_#999]">Изменить...</button></td><td class="p-0"><label class="relative mx-auto block h-3 w-3"><input type="checkbox" checked aria-label="Поля" class="block h-3 w-3 appearance-none border border-[#444] bg-white"><svg class="pointer-events-none absolute top-[3px] left-[2px] h-[6px] w-2" viewBox="0 0 8 6"><path d="M.5 2.500L3 5 7.500.5" fill="none" stroke="#333"/></svg></label></td></tr>
              <tr class="h-4 border-b border-dotted border-[#999]"><td class="border-r border-dotted border-[#999] p-0 pl-[2px]">Фильтр</td><td class="border-r border-dotted border-[#999] p-0"><button class="block h-[15px] w-full border border-[#aaa] bg-[#e1e1e1] leading-3 shadow-[inset_-1px_-1px_0_#999]">Изменить...</button></td><td class="p-0"><label class="relative mx-auto block h-3 w-3"><input type="checkbox" checked aria-label="Фильтр" class="block h-3 w-3 appearance-none border border-[#444] bg-white"><svg class="pointer-events-none absolute top-[3px] left-[2px] h-[6px] w-2" viewBox="0 0 8 6"><path d="M.5 2.500L3 5 7.500.5" fill="none" stroke="#333"/></svg></label></td></tr>
              <tr class="h-4 border-b border-dotted border-[#999]"><td class="overflow-hidden border-r border-dotted border-[#999] p-0 pl-[2px]">Сортировка/Группирова</td><td class="border-r border-dotted border-[#999] p-0"><button class="block h-[15px] w-full border border-[#aaa] bg-[#e1e1e1] leading-3 shadow-[inset_-1px_-1px_0_#999]">Изменить...</button></td><td class="p-0"><label class="relative mx-auto block h-3 w-3"><input type="checkbox" checked aria-label="Сортировка/Группировка" class="block h-3 w-3 appearance-none border border-[#444] bg-white"><svg class="pointer-events-none absolute top-[3px] left-[2px] h-[6px] w-2" viewBox="0 0 8 6"><path d="M.5 2.500L3 5 7.500.5" fill="none" stroke="#333"/></svg></label></td></tr>
              <tr class="h-4 border-b border-dotted border-[#999]"><td class="border-r border-dotted border-[#999] p-0 pl-[2px]">Форматирование</td><td class="border-r border-dotted border-[#999] p-0"><button class="block h-[15px] w-full border border-[#aaa] bg-[#e1e1e1] leading-3 shadow-[inset_-1px_-1px_0_#999]">Изменить...</button></td><td class="p-0"><label class="relative mx-auto block h-3 w-3"><input type="checkbox" checked aria-label="Форматирование" class="block h-3 w-3 appearance-none border border-[#444] bg-white"><svg class="pointer-events-none absolute top-[3px] left-[2px] h-[6px] w-2" viewBox="0 0 8 6"><path d="M.5 2.500L3 5 7.500.5" fill="none" stroke="#333"/></svg></label></td></tr>
              <tr class="h-4 border-b border-dotted border-[#999]"><td class="border-r border-dotted border-[#999] p-0 pl-[2px]">Вид</td><td class="border-r border-dotted border-[#999] p-0"><button class="block h-[15px] w-full border border-[#aaa] bg-[#e1e1e1] leading-3 shadow-[inset_-1px_-1px_0_#999]">Изменить...</button></td><td class="p-0"><label class="relative mx-auto block h-3 w-3"><input type="checkbox" checked aria-label="Вид" class="block h-3 w-3 appearance-none border border-[#444] bg-white"><svg class="pointer-events-none absolute top-[3px] left-[2px] h-[6px] w-2" viewBox="0 0 8 6"><path d="M.5 2.500L3 5 7.500.5" fill="none" stroke="#333"/></svg></label></td></tr>
            </tbody>
          </table>
        </div>
      </fieldset>
    </div>
    <div class="flex h-10 items-start gap-1 pt-2 pr-2 pl-[14px]">
      <a href="#help" class="mr-auto text-[#0a6ebd] underline">Как изменить шаблон вида?</a>
      <button class="h-5 w-[81px] border-2 border-[#1883c7] bg-[#e1e1e1]">ОК</button>
      <button class="h-5 w-[80px] border border-[#adadad] bg-[#e1e1e1]">Отмена</button>
      <button disabled class="h-5 w-[102px] border border-[#bfbfbf] bg-[#ccc] text-[#8c8c8c]">Применить свойства</button>
    </div>
  </div>

  <!-- Callouts -->
  <div class="absolute top-[544px] left-[492px] h-[67px] w-[143px] border-r border-b border-[#b9cccc] bg-[#003d3c] px-[10px] py-2 font-['Roboto',sans-serif] text-[21px] leading-[25px] text-white shadow-[1px_2px_4px_#0009]">Настройка<br>параметров
    <svg class="absolute -top-[17px] left-[99px] h-[18px] w-[18px]" viewBox="0 0 18 18"><path d="M8 0L0 18h17z" fill="#003d3c"/></svg>
  </div>
  <div class="absolute top-[255px] left-[638px] h-[67px] w-[196px] border-r border-b border-[#b9cccc] bg-[#003d3c] px-[11px] py-2 font-['Roboto',sans-serif] text-[21px] leading-[25px] text-white shadow-[1px_2px_4px_#0009]">Кликнуть ПКМ по<br>спецификации
    <svg class="absolute -top-[23px] left-[136px] h-6 w-9" viewBox="0 0 36 24"><path d="M34 0L0 24h21z" fill="#003d3c"/></svg>
  </div>

  <!-- Context menu -->
  <div role="menu" class="absolute top-[220px] left-[854px] flex w-[312px] flex-col border border-[#c0c0c0] bg-[#f0f0f0] py-[2px] text-black shadow-[4px_4px_3px_-1px_#0008]">
    <button role="menuitem" class="h-[22px] pl-[34px] text-left">Открыть</button>
    <button role="menuitem" class="h-[22px] pl-[34px] text-left">Закрыть</button>
    <hr class="my-[3px] mr-1 ml-[30px] border-[#ccc]">
    <button role="menuitem" class="h-[22px] pl-[34px] text-left">Применить свойства вида...</button>
    <button role="menuitem" class="h-[22px] bg-[#70c8f6] pl-[34px] text-left shadow-[inset_0_0_0_1px_#66788a,inset_0_0_4px_2px_#5d8aa8,0_2px_4px_#0008]">Создать шаблон из вида...</button>
    <hr class="my-[3px] mr-1 ml-[30px] border-[#ccc]">
    <button role="menuitem" class="flex h-[22px] items-center justify-between pr-3 pl-[34px]">Копирование вида<svg class="h-2 w-[5px]" viewBox="0 0 5 8"><path d="M.5.5L4 4 .5 7.500" fill="none" stroke="#333" stroke-width="1.200"/></svg></button>
    <button role="menuitem" disabled class="h-[22px] pl-[34px] text-left text-[#808080]">Преобразовать в независимый</button>
    <button role="menuitem" disabled class="h-[22px] pl-[34px] text-left text-[#808080]">Применить зависимые виды...</button>
    <button role="menuitem" disabled class="h-[22px] pl-[34px] text-left text-[#808080]">Сохранить в проекте как изображение...</button>
    <button role="menuitem" class="h-[22px] pl-[34px] text-left">Удалить</button>
    <button role="menuitem" class="h-[22px] pl-[34px] text-left">Копировать в буфер</button>
    <button role="menuitem" class="h-[22px] pl-[34px] text-left">Переименовать...</button>
    <button role="menuitem" class="flex h-[22px] items-center justify-between pr-3 pl-[34px]">Выбрать все экземпляры<svg class="h-2 w-[5px]" viewBox="0 0 5 8"><path d="M.5.5L4 4 .5 7.500" fill="none" stroke="#333" stroke-width="1.200"/></svg></button>
    <hr class="my-[3px] mr-1 ml-[30px] border-[#ccc]">
    <button role="menuitemcheckbox" aria-checked="true" class="flex h-[22px] items-center gap-[10px] pl-[2px]"><span class="grid h-[22px] w-[22px] place-items-center bg-[#70c8f6]"><svg class="h-2 w-[10px]" viewBox="0 0 10 8"><path d="M.5 4L3.500 7 9.500 1" fill="none" stroke="#123" stroke-width="1.300"/></svg></span>Свойства</button>
    <hr class="my-[3px] mr-1 ml-[30px] border-[#ccc]">
    <button role="menuitem" class="h-[22px] pl-[34px] text-left">Сохранить в файле...</button>
    <hr class="my-[3px] mr-1 ml-[30px] border-[#ccc]">
    <button role="menuitem" class="h-[22px] pl-[34px] text-left">Поиск...</button>
    <button role="menuitem" class="h-[22px] pl-[34px] text-left">Развернуть все</button>
    <button role="menuitem" class="h-[22px] pl-[34px] text-left">Свернуть все</button>
  </div>
</div>
</body>
</html>
